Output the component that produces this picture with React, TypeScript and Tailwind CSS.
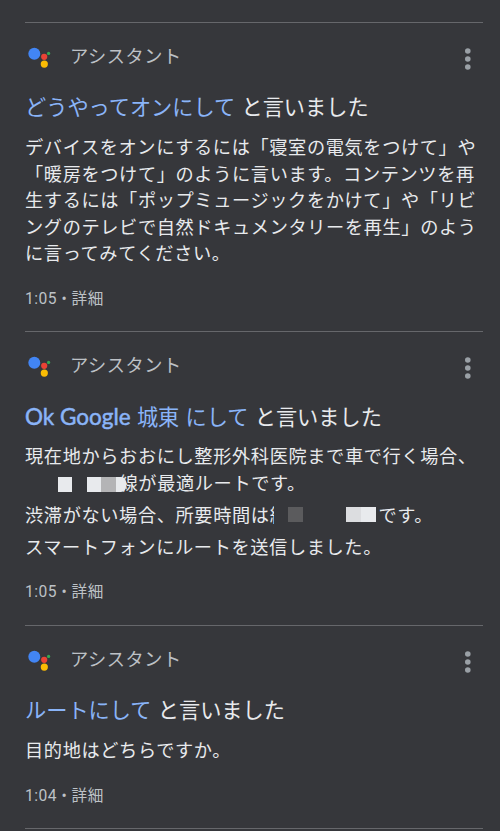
import type { ReactNode } from "react";

/* ── Assistant logo: four dots ── */
function AssistantLogo() {
  return (
    <svg width="28" height="28" viewBox="0 0 28 28" fill="none" aria-hidden>
      <circle cx="9.3" cy="11.7" r="6" fill="#4285f4" />
      <circle cx="19.2" cy="14.8" r="3.1" fill="#ea4335" />
      <circle cx="19.3" cy="22.1" r="3.6" fill="#fbbc04" />
      <circle cx="23.6" cy="11.4" r="1.6" fill="#34a853" />
    </svg>
  );
}

function MoreIcon() {
  return (
    <svg width="8" height="24" viewBox="0 0 8 24" fill="#9aa0a6" aria-hidden>
      <circle cx="3.8" cy="4" r="2.8" />
      <circle cx="3.8" cy="12" r="2.8" />
      <circle cx="3.8" cy="20" r="2.8" />
    </svg>
  );
}

/* ── Mosaic blocks over private parts of the answer ── */
function RouteMosaic() {
  return (
    <span className="relative h-[15px] w-[94.5px] shrink-0">
      <span className="absolute left-[33px] top-0 h-[15px] w-[14px] bg-[#e8eaed]" />
      <span className="absolute left-[62px] top-0 flex h-[15px] w-[39px] overflow-hidden rounded-r-[5px]">
        <span className="w-[14px] bg-[#e8eaed]" />
        <span className="w-[15px] bg-[#b4b4b6]" />
        <span className="w-[10px] bg-[#e8eaed]" />
      </span>
    </span>
  );
}

function DurationMosaic() {
  return (
    <span className="relative -ml-[14px] flex h-6 w-[104px] shrink-0 items-center bg-[#36373b] pb-[3px] pl-[14px]">
      <span className="h-[15px] w-[15px] bg-[#5b5b5d]" />
      <span className="ml-[43px] h-[15px] w-[15px] bg-[#dcdde0]" />
      <span className="h-[15px] w-[15px] bg-[#e8eaed]" />
    </span>
  );
}

type Activity = {
  query: ReactNode;
  paragraphs: ReactNode[][];
  time: string;
};

const ACTIVITIES: Activity[] = [
  {
    query: "どうやってオンにして",
    paragraphs: [
      [
        "デバイスをオンにするには「寝室の電気をつけて」や",
        "「暖房をつけて」のように言います。コンテンツを再",
        "生するには「ポップミュージックをかけて」や「リビ",
        "ングのテレビで自然ドキュメンタリーを再生」のよう",
        "に言ってみてください。",
      ],
    ],
    time: "1:05",
  },
  {
    query: (
      <>
        <span className="font-['Lato'] text-[22.5px] [-webkit-text-stroke:0.5px_#8ab4f8] [word-spacing:0px]">
          Ok Google
        </span>{" "}
        城東 にして
      </>
    ),
    paragraphs: [
      [
        "現在地からおおにし整形外科医院まで車で行く場合、",
        <>
          <RouteMosaic />
          線が最適ルートです。
        </>,
      ],
      [
        <>
          渋滞がない場合、所要時間は約
          <DurationMosaic />
          です。
        </>,
      ],
      ["スマートフォンにルートを送信しました。"],
    ],
    time: "1:05",
  },
  {
    query: "ルートにして",
    paragraphs: [["目的地はどちらですか。"]],
    time: "1:04",
  },
];

function ActivityCard({ query, paragraphs, time }: Activity) {
  return (
    <article className="border-t border-[#66676b] pb-[22.8px] pt-[13px]">
      <header className="flex h-10 items-center">
        <AssistantLogo />
        <span className="ml-[17px] pt-[2px] text-[18.2px] leading-10 tracking-[0.55px] text-[#bdc1c6]">
          アシスタント
        </span>
        <button className="ml-auto mr-[11px] mt-[6px]" aria-label="その他">
          <MoreIcon />
        </button>
      </header>
      <h2 className="mt-4 h-8 whitespace-nowrap text-[21.2px] leading-8 text-[#e8eaed] [word-spacing:1px]">
        <span className="text-[#8ab4f8]">{query}</span> と言いました
      </h2>
      <div className="mt-[11px] flex flex-col gap-[5.5px] text-[18.2px] leading-[26.5px] tracking-[0.63px] text-[#e8eaed]">
        {paragraphs.map((lines, i) => (
          <div key={i}>
            {lines.map((line, j) => (
              <div key={j} className="flex h-[26.5px] items-center whitespace-nowrap">
                {line}
              </div>
            ))}
          </div>
        ))}
      </div>
      <p className="mt-[21px] h-5 text-[15.6px] leading-5 tracking-[0.5px] text-[#bdc1c6]">
        {time} • 詳細
      </p>
    </article>
  );
}

export default function App() {
  return (
    <main className="h-[831px] overflow-hidden bg-[#36373b] pl-[25px] pr-[17px] pt-[22px] font-['Roboto','Noto_Sans_CJK_JP',sans-serif]">
      {ACTIVITIES.map((a, i) => (
        <ActivityCard key={i} {...a} />
      ))}
      <div className="border-t border-[#66676b]" />
    </main>
  );
}
